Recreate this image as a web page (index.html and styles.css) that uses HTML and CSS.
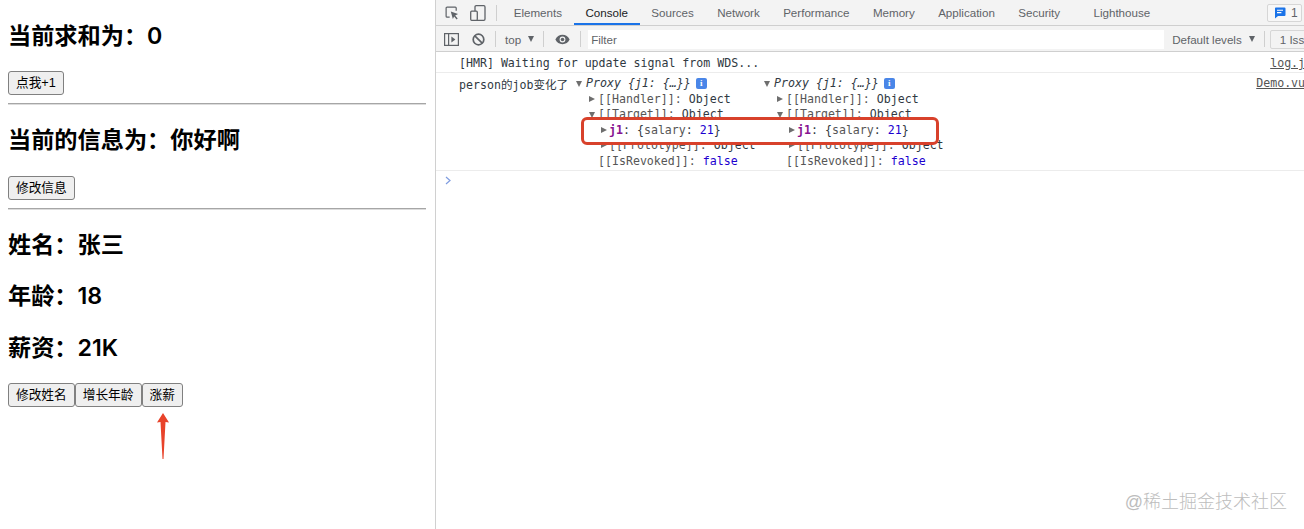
FILE: index.html
```html
<!DOCTYPE html>
<html lang="zh-CN">
<head>
<meta charset="utf-8">
<title>Demo</title>
<link rel="stylesheet" href="styles.css">
</head>
<body>
<main class="app">
  <h2 class="heading first">当前求和为：0</h2>
  <button class="btn">点我+1</button>
  <hr class="rule">
  <h2 class="heading">当前的信息为：你好啊</h2>
  <button class="btn">修改信息</button>
  <hr class="rule">
  <h2 class="heading">姓名：张三</h2>
  <h2 class="heading tight">年龄：18</h2>
  <h2 class="heading tight">薪资：21K</h2>
  <div class="btn-row">
    <button class="btn">修改姓名</button><button class="btn">增长年龄</button><button class="btn">涨薪</button>
  </div>
  <svg class="up-arrow" width="14" height="46" viewBox="0 0 14 46"><path d="M7 0 L13 9.5 L9.5 9 L7.5 46 L6.5 46 L4.5 9 L1 9.5 Z" fill="#e8432a"/></svg>
</main>

<section class="devtools">
  <div class="tabbar">
    <svg class="ico ico-inspect" width="14" height="14" viewBox="0 0 15 15" fill="none"><path d="M5 12H2.2a1 1 0 0 1-1-1V2.2a1 1 0 0 1 1-1H11a1 1 0 0 1 1 1V5" stroke="#5f6368" stroke-width="1.3"/><path d="M6.2 5.8 L14 8.6 L10.9 10.3 L13.6 13.4 L12.4 14.4 L9.8 11.3 L8.4 13.9 Z" fill="#5f6368"/></svg>
    <svg class="ico ico-device" width="16" height="16" viewBox="0 0 16 16" fill="none"><rect x="5" y="0.7" width="10" height="14.6" rx="1.2" stroke="#5f6368" stroke-width="1.3"/><rect x="0.7" y="6.2" width="6.6" height="9.1" rx="1" fill="#f3f3f3" stroke="#5f6368" stroke-width="1.3"/></svg>
    <span class="sep sep-tabs"></span>
    <nav class="tabs">
      <span class="tab">Elements</span>
      <span class="tab active">Console</span>
      <span class="tab">Sources</span>
      <span class="tab">Network</span>
      <span class="tab">Performance</span>
      <span class="tab">Memory</span>
      <span class="tab">Application</span>
      <span class="tab">Security</span>
      <span class="tab tab-far">Lighthouse</span>
    </nav>
    <span class="issues-badge">
      <svg width="12" height="12" viewBox="0 0 12 12"><path d="M1.5 0.5h9a1 1 0 0 1 1 1v6.6a1 1 0 0 1-1 1H4L1 11.5V1.5a1 1 0 0 1 .5-1z" fill="#1a73e8"/><path d="M3 3.2h6M3 5.6h4.4" stroke="#fff" stroke-width="1.1"/></svg>
      <span>1</span>
    </span>
  </div>

  <div class="filterbar">
    <svg class="ico ico-dock" width="15" height="13" viewBox="0 0 15 13" fill="none"><rect x="0.6" y="0.6" width="13.8" height="11.8" stroke="#5f6368" stroke-width="1.2"/><path d="M4.6 1V12" stroke="#5f6368" stroke-width="1.2"/><path d="M7.4 3.6 L11.4 6.5 L7.4 9.4 Z" fill="#5f6368"/></svg>
    <svg class="ico ico-block" width="13" height="13" viewBox="0 0 13 13" fill="none"><circle cx="6.5" cy="6.5" r="5.3" stroke="#5f6368" stroke-width="1.7"/><path d="M2.8 2.8 L10.2 10.2" stroke="#5f6368" stroke-width="1.7"/></svg>
    <span class="sep sep-a"></span>
    <span class="context">top</span>
    <span class="caret"></span>
    <span class="sep sep-b"></span>
    <svg class="ico ico-eye" width="16" height="11" viewBox="0 0 16 11"><path d="M8 0.5C4.6 0.5 1.8 2.5 0.4 5.5 1.8 8.5 4.6 10.5 8 10.5s6.2-2 7.6-5C14.2 2.5 11.4 0.5 8 0.5zM8 8.6a3.1 3.1 0 1 1 0-6.2 3.1 3.1 0 0 1 0 6.2z" fill="#5f6368"/><circle cx="8" cy="5.5" r="1.9" fill="#5f6368"/></svg>
    <span class="sep sep-c"></span>
    <span class="filter-input">Filter</span>
    <span class="levels">Default levels</span>
    <span class="caret"></span>
    <span class="sep sep-d"></span>
    <span class="issue-btn">1 Issue</span>
  </div>

  <div class="console">
    <div class="msg msg-hmr">
      <span class="msg-text">[HMR] Waiting for update signal from WDS...</span>
      <a class="src">log.js:24</a>
    </div>
    <div class="msg msg-log">
      <span class="msg-label">person的job变化了</span>
      <div class="objects">
        <div class="obj">
          <div class="line"><i class="tri open"></i><em>Proxy {j1: {…}}</em><b class="info">i</b></div>
          <div class="line d1"><i class="tri"></i><span class="dim">[[Handler]]:</span> Object</div>
          <div class="line d1"><i class="tri open"></i><span class="dim">[[Target]]:</span> Object</div>
          <div class="line d2 raised"><i class="tri"></i><span class="key">j1</span>: {<span class="dim">salary</span>: <span class="num">21</span>}</div>
          <div class="line d2"><i class="tri"></i><span class="dim">[[Prototype]]:</span> Object</div>
          <div class="line d3"><span class="dim">[[IsRevoked]]:</span> <span class="num">false</span></div>
        </div>
        <div class="obj">
          <div class="line"><i class="tri open"></i><em>Proxy {j1: {…}}</em><b class="info">i</b></div>
          <div class="line d1"><i class="tri"></i><span class="dim">[[Handler]]:</span> Object</div>
          <div class="line d1"><i class="tri open"></i><span class="dim">[[Target]]:</span> Object</div>
          <div class="line d2 raised"><i class="tri"></i><span class="key">j1</span>: {<span class="dim">salary</span>: <span class="num">21</span>}</div>
          <div class="line d2"><i class="tri"></i><span class="dim">[[Prototype]]:</span> Object</div>
          <div class="line d3"><span class="dim">[[IsRevoked]]:</span> <span class="num">false</span></div>
        </div>
        <div class="callout"></div>
      </div>
      <a class="src src-log">Demo.vue:24</a>
    </div>
    <div class="prompt">
      <svg width="6" height="9" viewBox="0 0 6 9" fill="none"><path d="M1 1 L5 4.5 L1 8" stroke="#7f9ce0" stroke-width="1.2"/></svg>
    </div>
  </div>
</section>

<div class="watermark">@稀土掘金技术社区</div>
</body>
</html>
```

FILE: styles.css
```css
* { box-sizing: border-box; }

html, body { height: 100%; }

body {
  margin: 0;
  height: 529px;
  display: flex;
  overflow: hidden;
  background: #fff;
  color: #000;
  font-family: "Liberation Sans", "Noto Sans CJK SC", sans-serif;
}

/* Left: the app */
.app {
  flex: none;
  width: 436px;
  padding: 0 9px 0 8px;
  border-right: 1px solid #d0d0d0;
}

.heading {
  margin: 21.75px 0;
  font-family: "Inter", "Noto Sans CJK SC", sans-serif;
  font-size: 23.2px;
  line-height: 27px;
  font-weight: 600;
}
.heading.first { margin-top: 22.5px; }
.heading.tight { margin-top: 24.5px; }

.btn {
  display: inline-block;
  height: 24px;
  margin: 0;
  padding: 0 7px;
  vertical-align: top;
  font: 12.7px/22px "Liberation Sans", "Noto Sans CJK SC", sans-serif;
  color: #000;
  background: #efefef;
  border: 1px solid #808080;
  border-radius: 3px;
}

.rule {
  margin: 8px 0 0;
  height: 2px;
  border: 0;
  border-top: 1px solid #a6a6a6;
  border-bottom: 1px solid #dcdcdc;
}

.btn-row { display: flex; }

.up-arrow {
  display: block;
  margin: 6px 0 0 148px;
}

/* Right: devtools */
.devtools {
  flex: 1;
  min-width: 0;
  overflow: hidden;
  font-size: 11.6px;
  color: #5f6368;
}

.tabbar, .filterbar {
  display: flex;
  align-items: center;
  background: #f3f3f3;
  border-bottom: 1px solid #cfcfcf;
}

.tabbar { height: 26px; }
.filterbar { height: 26px; padding-top: 1px; }

.ico { flex: none; display: block; }
.ico-inspect { margin-left: 9px; }
.ico-device { margin-left: 11px; }
.ico-dock { margin-left: 8px; }
.ico-block { margin-left: 13px; }
.ico-eye { margin-left: 11px; width: 15px; }

.sep {
  flex: none;
  width: 1px;
  height: 16px;
  background: #cfcfcf;
}
.sep-tabs { margin-left: 10px; }
.sep-a { margin-left: 10px; }
.sep-b { margin-left: 9px; }
.sep-c { margin-left: 10px; }
.sep-d { margin-left: 9px; }

.tabs {
  display: flex;
  align-self: stretch;
  margin-left: 5px;
}

.tab {
  padding: 0 11.7px;
  line-height: 25px;
  white-space: nowrap;
}
.tab.active {
  color: #202124;
  box-shadow: inset 0 -2px 0 #1a73e8;
}
.tab-far { margin-left: 10px; }

.issues-badge {
  display: flex;
  align-items: center;
  gap: 5px;
  flex: none;
  width: 35px;
  height: 18px;
  margin-left: auto;
  margin-right: 2px;
  padding-left: 6px;
  font-size: 12px;
  color: #5f6368;
  background: #f7f7f7;
  border: 1px solid #d6d6d6;
  border-radius: 2px;
}

.context { margin-left: 9px; }

.caret {
  flex: none;
  width: 0;
  height: 0;
  margin-left: 7px;
  border-left: 3.5px solid transparent;
  border-right: 3.5px solid transparent;
  border-top: 6px solid #5f6368;
}

.filter-input {
  flex: none;
  width: 576px;
  height: 19px;
  margin-left: 7px;
  padding-left: 3px;
  line-height: 19px;
  background: #fff;
}

.levels { margin-left: 8px; white-space: nowrap; }

.issue-btn {
  flex: none;
  width: 60px;
  height: 19px;
  margin-left: 5px;
  padding-left: 9px;
  line-height: 17px;
  white-space: nowrap;
  border: 1px solid #d6d6d6;
  border-radius: 2px;
}

.console {
  margin-right: -29px;
  font: 11.6px/15.6px "DejaVu Sans Mono", "Noto Sans CJK SC", monospace;
  color: #303942;
}

.msg {
  display: flex;
  justify-content: space-between;
  padding-left: 23px;
  border-bottom: 1px solid #ececec;
}
.msg-hmr { height: 21px; padding-top: 4px; }
.msg-log { height: 98px; padding-top: 3px; }

.msg-label { flex: none; width: 117px; padding-top: 2px; }

.objects {
  position: relative;
  flex: none;
  display: flex;
  width: 376px;
  margin-right: auto;
}

.obj { flex: none; width: 188px; }

.line {
  position: relative;
  white-space: pre;
  height: 15.6px;
}
.line em { font-style: italic; }
.d1 { padding-left: 13px; }
.d2 { padding-left: 25px; }
.d3 { padding-left: 22px; }
.raised { z-index: 2; }

.tri {
  display: inline-block;
  width: 0;
  height: 0;
  vertical-align: 1px;
  margin-right: 3px;
  border-top: 3.5px solid transparent;
  border-bottom: 3.5px solid transparent;
  border-left: 6px solid #6e6e6e;
}
.d2 .tri { margin-right: 2px; }
.tri.open {
  margin-right: 4px;
  vertical-align: 0;
  border-left: 3.5px solid transparent;
  border-right: 3.5px solid transparent;
  border-bottom: 0;
  border-top: 6px solid #6e6e6e;
}
.d1 .tri.open { margin-right: 3px; }

.dim { color: #565656; }
.key { color: #881391; font-weight: 700; }
.num { color: #1c00cf; }

.info {
  display: inline-block;
  width: 11px;
  height: 11px;
  margin-left: 5px;
  vertical-align: 1px;
  font: 700 9px/11px "Liberation Serif", serif;
  text-align: center;
  color: #fff;
  background: #4a86e8;
  border-radius: 2px;
}

.callout {
  position: absolute;
  z-index: 1;
  left: 5px;
  top: 41px;
  width: 358px;
  height: 28px;
  background: #fff;
  border: 3px solid #d8412b;
  border-radius: 6px;
}

.src {
  flex: none;
  color: #545454;
  text-decoration: underline;
}

.prompt {
  padding: 5px 0 0 9px;
  line-height: 0;
}

.watermark {
  position: absolute;
  right: 17px;
  top: 490px;
  font-size: 18px;
  line-height: 24px;
  color: #bdbdbd;
  font-weight: 300;
}
```
